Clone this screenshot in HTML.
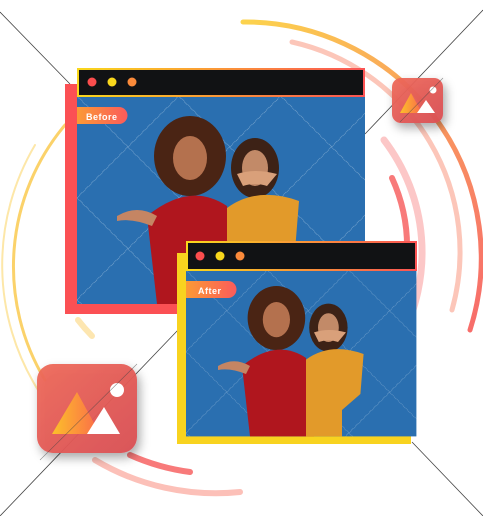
<!DOCTYPE html>
<html><head><meta charset="utf-8"><style>
html,body{margin:0;padding:0;width:483px;height:516px;overflow:hidden;background:#fff;font-family:"Liberation Sans",sans-serif}
</style></head><body>
<svg width="483" height="516" viewBox="0 0 483 516" xmlns="http://www.w3.org/2000/svg">
<defs>
<linearGradient id="yr" x1="0" y1="0" x2="1" y2="1"><stop offset="0" stop-color="#fcd34d"/><stop offset="1" stop-color="#f76b6b"/></linearGradient>
<linearGradient id="hb" x1="0" x2="1"><stop offset="0" stop-color="#f9d71c"/><stop offset="1" stop-color="#fb5454"/></linearGradient>
<linearGradient id="lbl" x1="0" x2="1"><stop offset="0" stop-color="#fb9a35"/><stop offset="1" stop-color="#fb5b5b"/></linearGradient>
<linearGradient id="tri" x1="0" x2="1"><stop offset="0" stop-color="#fcc02a"/><stop offset="1" stop-color="#fb6a4a"/></linearGradient>
<linearGradient id="ico" x1="0" y1="0" x2="1" y2="1"><stop offset="0" stop-color="#ee6a5a"/><stop offset="1" stop-color="#d94f55"/></linearGradient>
<filter id="sh" x="-30%" y="-30%" width="170%" height="170%"><feDropShadow dx="3" dy="5" stdDeviation="5" flood-color="#000" flood-opacity="0.35"/></filter>
<pattern id="wm" width="72" height="72" patternUnits="userSpaceOnUse" patternTransform="rotate(45)"><rect width="72" height="72" fill="none" stroke="#cfe0f0" stroke-opacity="0.45" stroke-dasharray="4 4" stroke-width="1"/></pattern>
<g id="photo">
<rect width="288" height="208" fill="#2a6fb0"/>
<rect width="288" height="208" fill="url(#wm)"/>
<ellipse cx="113" cy="60" rx="36" ry="40" fill="#4a2414"/>
<ellipse cx="113" cy="62" rx="17" ry="22" fill="#b4714e"/>
<path d="M70 120 Q113 85 150 110 L160 208 L80 208 Z" fill="#b0161e"/>
<path d="M40 120 Q60 108 80 120 L75 130 Q55 122 40 125Z" fill="#c58563"/>
<ellipse cx="178" cy="72" rx="24" ry="30" fill="#3d2216"/>
<ellipse cx="178" cy="72" rx="13" ry="18" fill="#c28a68"/>
<path d="M150 112 Q180 90 222 105 L218 155 L195 175 L195 208 L150 208Z" fill="#e29a2a"/>
<path d="M160 78 Q178 72 200 78 L190 90 Q178 86 166 90Z" fill="#d9a07a"/>
</g>
</defs>

<!-- arcs -->
<g fill="none" stroke-linecap="round">
<path d="M243 22 A236 236 0 0 1 470 330" stroke="url(#yr)" stroke-width="5"/>
<path d="M292 42 A215 215 0 0 1 452 310" stroke="#fbb8a8" stroke-width="5" opacity="0.8"/>
<path d="M384 140 A185 185 0 0 1 400 340" stroke="#fcc7c7" stroke-width="7"/>
<path d="M392 178 A165 165 0 0 1 390 320" stroke="#f87a7a" stroke-width="6"/>
<path d="M65 125 A220 220 0 0 0 45 380" stroke="#fbd26a" stroke-width="3"/>
<path d="M35 145 A236 236 0 0 0 38 390" stroke="#fde7a8" stroke-width="2"/>
<path d="M78 320 A180 180 0 0 0 92 336" stroke="#fde6b0" stroke-width="6"/>
<path d="M130 455 A215 215 0 0 0 190 472" stroke="#f87a7a" stroke-width="6"/>
<path d="M95 460 A236 236 0 0 0 240 492" stroke="#fcc0b8" stroke-width="6"/>
</g>
<!-- diagonal lines -->
<g stroke="#444" stroke-width="0.8">
<line x1="0" y1="12" x2="70" y2="84"/>
<line x1="483" y1="10" x2="365" y2="134"/>
<line x1="178" y1="330" x2="0" y2="516"/>
<line x1="412" y1="442" x2="483" y2="516"/>
</g>

<!-- Before window -->
<rect x="65" y="84" width="290" height="230" fill="#fb5054"/>
<use href="#photo" x="77" y="96"/>
<rect x="78" y="69" width="286" height="27" fill="#111214" stroke="url(#hb)" stroke-width="2"/>
<circle cx="92" cy="82" r="4.5" fill="#fb4d4d"/><circle cx="112" cy="82" r="4.5" fill="#f9d71c"/><circle cx="132" cy="82" r="4.5" fill="#fb8a3a"/>
<path d="M77 107 H119 a8.5 8.5 0 0 1 0 17 H77Z" fill="url(#lbl)"/>
<text x="86" y="120" font-size="9" font-weight="bold" fill="#fff" letter-spacing="0.5">Before</text>

<!-- After window -->
<rect x="177" y="253" width="234" height="191" fill="#f8d31f"/>
<g transform="translate(186 270) scale(0.8 0.8)"><use href="#photo"/></g>
<rect x="187" y="242" width="229" height="28" fill="#111214" stroke="url(#hb)" stroke-width="2"/>
<circle cx="200" cy="256" r="4.5" fill="#fb4d4d"/><circle cx="220" cy="256" r="4.5" fill="#f9d71c"/><circle cx="240" cy="256" r="4.5" fill="#fb8a3a"/>
<path d="M186 281 H228 a8.5 8.5 0 0 1 0 17 H186Z" fill="url(#lbl)"/>
<text x="198" y="294" font-size="9" font-weight="bold" fill="#fff" letter-spacing="0.5">After</text>

<!-- icons -->
<g filter="url(#sh)">
<rect x="392" y="78" width="51" height="45" rx="9" fill="url(#ico)" opacity="0.95"/>
<rect x="37" y="364" width="100" height="89" rx="16" fill="url(#ico)" opacity="0.95"/>
</g>
<path d="M400 113 L411 93 L422 113Z" fill="url(#tri)"/>
<path d="M417 113 L426 100 L435 113Z" fill="#fff"/>
<circle cx="433" cy="90" r="3.5" fill="#fff"/>
<path d="M52 434 L77 392 L100 434Z" fill="url(#tri)"/>
<path d="M87 434 L104 407 L120 434Z" fill="#fff"/>
<circle cx="117" cy="390" r="7" fill="#fff"/>
<line x1="137" y1="364" x2="40" y2="460" stroke="#444" stroke-width="0.6" opacity="0.6"/>
<line x1="443" y1="78" x2="400" y2="122" stroke="#444" stroke-width="0.6" opacity="0.6"/>
</svg>
</body></html>
